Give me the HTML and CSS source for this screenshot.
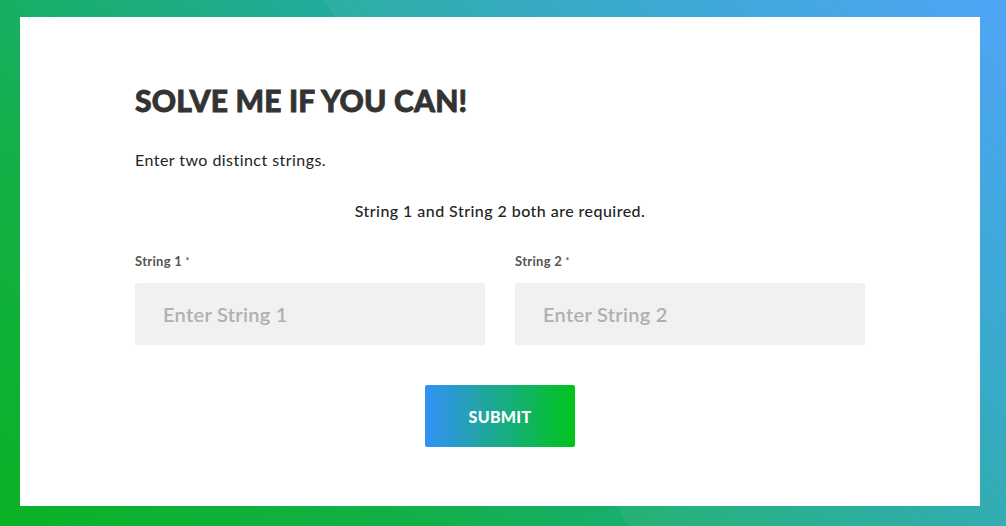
FILE: index.html
```html
<!DOCTYPE html>
<html>
<head>
<meta charset="utf-8">
<link rel="stylesheet" href="styles.css">
</head>
<body>
<div class="page">
  <div class="card">
    <h1 class="title">SOLVE ME IF YOU CAN!</h1>
    <p class="intro">Enter two distinct strings.</p>
    <p class="notice">String 1 and String 2 both are required.</p>
    <form class="form">
      <div class="fields">
        <div class="field">
          <label class="label">String 1 <span class="req">*</span></label>
          <input class="input" type="text" placeholder="Enter String 1">
        </div>
        <div class="field">
          <label class="label">String 2 <span class="req">*</span></label>
          <input class="input" type="text" placeholder="Enter String 2">
        </div>
      </div>
      <div class="actions">
        <button class="submit" type="button">SUBMIT</button>
      </div>
    </form>
  </div>
</div>
</body>
</html>
```

FILE: styles.css
```css
* { box-sizing: border-box; }
html, body { margin: 0; padding: 0; }
body {
  font-family: Lato, "Open Sans", sans-serif;
  width: 1006px;
  height: 526px;
  overflow: hidden;
}
.page {
  width: 1006px;
  height: 526px;
  padding: 17px 26px 20px 20px;
  background:
    linear-gradient(60deg, rgba(255,255,255,0) 48%, rgba(255,255,255,0.05) 48%),
    linear-gradient(42deg, #0ab224 0%, #12b04a 28%, #1fac90 52%, #2fa5cc 75%, #47a0f7 100%);
}
.card {
  background: #fff;
  width: 960px;
  height: 489px;
  padding: 65px 115px 0;
}
.title {
  margin: 0;
  font-size: 30px;
  font-weight: 900;
  color: #333;
  line-height: 36px;
  letter-spacing: 0.2px;
  -webkit-text-stroke: 0.8px #333;
}
.intro {
  margin: 31px 0 0;
  font-size: 16px;
  color: #222;
  line-height: 22px;
  letter-spacing: 0.45px;
}
.notice {
  margin: 29px 0 0;
  font-size: 16px;
  color: #222;
  line-height: 22px;
  text-align: center;
  font-weight: 500;
  letter-spacing: 0.45px;
}
.form { margin-top: 30px; }
.fields {
  display: flex;
  gap: 30px;
}
.field { flex: 1; display: flex; flex-direction: column; }
.label {
  font-size: 13px;
  font-weight: 700;
  color: #555;
  line-height: 18px;
  letter-spacing: 0.3px;
}
.req { font-size: 9px; vertical-align: top; }
.input {
  margin-top: 13px;
  height: 62px;
  border: none;
  border-radius: 2px;
  background: #f1f1f1;
  padding: 0 28px;
  font-family: inherit;
  font-size: 20px;
  font-weight: 600;
  letter-spacing: 0.3px;
  color: #333;
  outline: none;
}
.input::placeholder { color: #b0b0b0; }
.actions {
  display: flex;
  justify-content: center;
  margin-top: 40px;
}
.submit {
  width: 150px;
  height: 62px;
  border: none;
  border-radius: 2px;
  background: linear-gradient(90deg, #3391f7, #00c51a);
  color: #fff;
  font-family: inherit;
  font-size: 16px;
  font-weight: 900;
  letter-spacing: 0.3px;
  cursor: pointer;
}
```
